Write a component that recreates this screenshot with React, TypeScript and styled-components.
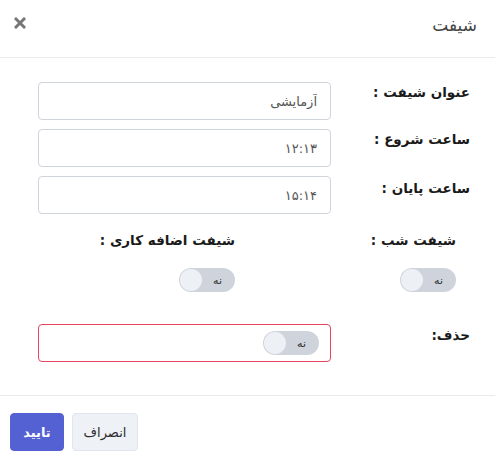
import styled, { createGlobalStyle } from 'styled-components'

const GlobalStyle = createGlobalStyle`
  html, body {
    margin: 0;
    padding: 0;
    background: #fff;
  }
  body {
    font-family: "DejaVu Sans", "Noto Sans", sans-serif;
    color: #212529;
  }
`

const Modal = styled.div`
  direction: rtl;
  width: 495px;
  height: 466px;
  background: #fff;
  display: flex;
  flex-direction: column;
`

const Header = styled.div`
  height: 58px;
  flex-shrink: 0;
  display: flex;
  align-items: center;
  justify-content: space-between;
  padding: 0 18px 8px 14px;
  box-sizing: border-box;
  border-bottom: 1px solid #e9ecef;
`

const Title = styled.h5`
  margin: 0;
  font-size: 17px;
  font-weight: 400;
  color: #444;
`

const CloseButton = styled.button`
  background: transparent;
  border: none;
  padding: 0;
  margin-top: -4px;
  width: 12px;
  height: 12px;
  display: flex;
  cursor: pointer;
`

const Body = styled.div`
  padding: 24px 25px 0 38px;
  display: flex;
  flex-direction: column;
  height: 338px;
  flex-shrink: 0;
  box-sizing: border-box;
  border-bottom: 1px solid #e9ecef;
`

const FieldRow = styled.div<{ $mt?: number }>`
  display: grid;
  grid-template-columns: 1fr 293px;
  margin-top: ${p => p.$mt ?? 0}px;
`

const Label = styled.label<{ $pt?: number }>`
  font-size: 13.5px;
  font-weight: 700;
  color: #1a1a1a;
  padding-top: ${p => p.$pt ?? 2}px;
`

const Input = styled.input`
  height: 38px;
  box-sizing: border-box;
  border: 1px solid #cfd4dc;
  border-radius: 4px;
  padding: 0 13px;
  font-family: inherit;
  font-size: 13px;
  color: #555;
  direction: rtl;
  outline: none;
`

const ToggleGrid = styled.div`
  display: grid;
  grid-template-columns: 221px 221px;
  margin: 16px 14px 0 -24px;
`

const ToggleCell = styled.div`
  display: flex;
  flex-direction: column;
  align-items: flex-start;
  gap: 20px;
`

const Switch = styled.div`
  width: 56px;
  height: 24px;
  border-radius: 12px;
  background: #cfd4dc;
  display: flex;
  align-items: center;
  justify-content: space-between;
  padding: 0 13px 0 1px;
  box-sizing: border-box;
  direction: ltr;
`

const Knob = styled.span`
  width: 22px;
  height: 22px;
  border-radius: 50%;
  background: #edf0f5;
`

const SwitchText = styled.span`
  font-size: 11px;
  color: #333;
`

const DangerBox = styled.div`
  height: 38px;
  box-sizing: border-box;
  border: 1px solid #e8445f;
  border-radius: 4px;
  display: flex;
  align-items: center;
  padding: 0 11px;
`

const Footer = styled.div`
  display: flex;
  justify-content: flex-end;
  gap: 8px;
  padding: 17px 10px 0;
`

const Button = styled.button<{ $primary?: boolean }>`
  height: 38px;
  width: ${p => (p.$primary ? 54 : 66)}px;
  padding: 0;
  border-radius: 4px;
  font-family: inherit;
  font-size: 13px;
  font-weight: ${p => (p.$primary ? 700 : 400)};
  cursor: pointer;
  border: 1px solid ${p => (p.$primary ? '#5461d2' : '#e1e5ec')};
  background: ${p => (p.$primary ? '#5461d2' : '#eef1f6')};
  color: ${p => (p.$primary ? '#fff' : '#2b2b2b')};
`

const Toggle = () => (
  <Switch>
    <Knob />
    <SwitchText>نه</SwitchText>
  </Switch>
)

const App = () => {
  return (
    <>
      <GlobalStyle />
      <Modal>
        <Header>
          <Title>شیفت</Title>
          <CloseButton aria-label='close'>
            <svg width='12' height='12' viewBox='0 0 12 12'>
              <path d='M2 2 L10 10 M10 2 L2 10' stroke='#777' strokeWidth='3' strokeLinecap='square' />
            </svg>
          </CloseButton>
        </Header>
        <Body>
          <FieldRow>
            <Label>عنوان شیفت :</Label>
            <Input defaultValue='آزمایشی' />
          </FieldRow>
          <FieldRow $mt={9}>
            <Label>ساعت شروع :</Label>
            <Input defaultValue='۱۲:۱۳' />
          </FieldRow>
          <FieldRow $mt={9}>
            <Label $pt={4}>ساعت پایان :</Label>
            <Input defaultValue='۱۵:۱۴' />
          </FieldRow>
          <ToggleGrid>
            <ToggleCell>
              <Label>شیفت شب :</Label>
              <Toggle />
            </ToggleCell>
            <ToggleCell>
              <Label>شیفت اضافه کاری :</Label>
              <Toggle />
            </ToggleCell>
          </ToggleGrid>
          <FieldRow $mt={32}>
            <Label $pt={3}>حذف:</Label>
            <DangerBox>
              <Toggle />
            </DangerBox>
          </FieldRow>
        </Body>
        <Footer>
          <Button>انصراف</Button>
          <Button $primary>تایید</Button>
        </Footer>
      </Modal>
    </>
  )
}

export default App
